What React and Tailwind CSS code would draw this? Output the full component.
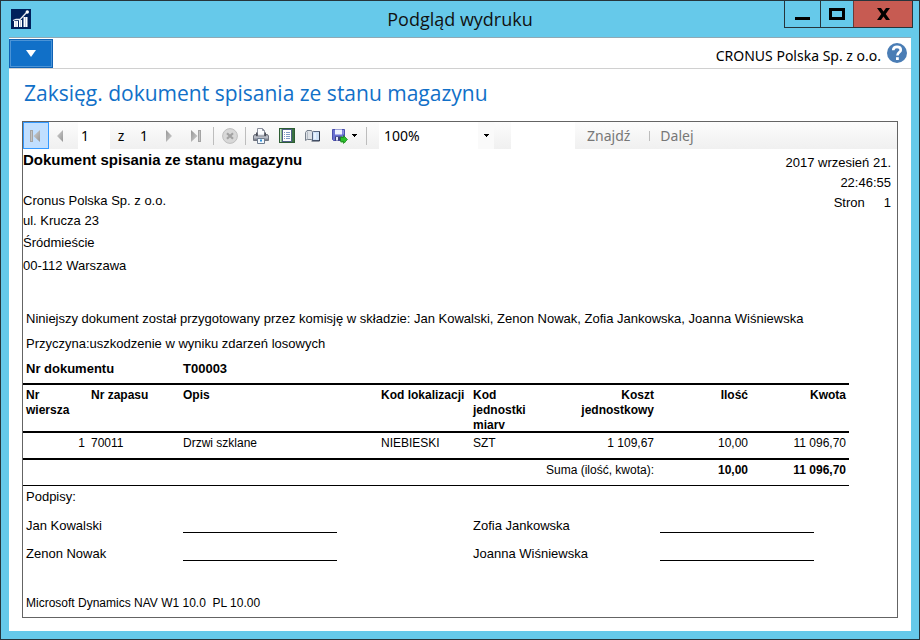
import React from 'react';

function AppIcon() {
  return (
    <svg width="20" height="20" viewBox="0 0 20 20" aria-hidden="true">
      <rect width="20" height="20" fill="#00205b" />
      <path d="M3 12h4v6H3zM8 11h3v7H8zM12.5 8h4v10h-4z" fill="#fff" />
      <path d="M5 12v6M9.5 11v7M14.5 8v10" stroke="#c3cbdc" strokeWidth="1" />
      <path d="M2 11.5 L5 10.5 L9 10.5 L15.5 3.5" fill="none" stroke="#e8ebf2" strokeWidth="1.3" />
      <circle cx="16.3" cy="3" r="1.7" fill="#fff" />
    </svg>
  );
}

function HelpIcon() {
  return (
    <svg width="20" height="20" viewBox="0 0 20 20" aria-hidden="true">
      <circle cx="10" cy="10" r="10" fill="#4a7db5" />
      <path d="M6.2 7.2C6.2 4.8 7.8 3.9 10 3.9s3.8 1.1 3.8 3.1c0 2.4-3.4 2.4-3.4 5.6" fill="none" stroke="#fff" strokeWidth="2.6" />
      <rect x="9" y="14.2" width="2.8" height="2.8" fill="#fff" />
    </svg>
  );
}

function Arrow({ dir, bar }) {
  return (
    <svg width="12" height="14" viewBox="0 0 12 14" className={dir === 'right' ? 'rotate-180' : ''} aria-hidden="true">
      <defs>
        <linearGradient id={`g-${dir}-${bar ? 'b' : 'n'}`} x1="0" x2="1" y1="0" y2="1">
          <stop offset="0" stopColor="#d2d2d2" />
          <stop offset="1" stopColor="#959595" />
        </linearGradient>
      </defs>
      {bar && <rect x="0.5" y="1.5" width="2" height="11" fill="#c4c4c4" stroke="#a4a4a4" strokeWidth="1" />}
      <path d={bar ? 'M10 1v12L3.500 7z' : 'M9 1v12L3 7z'} fill={`url(#g-${dir}-${bar ? 'b' : 'n'})`} />
    </svg>
  );
}

function StopIcon() {
  return (
    <svg width="16" height="16" viewBox="0 0 16 16" aria-hidden="true">
      <circle cx="8" cy="8" r="7.4" fill="#d8d8d8" stroke="#bebebe" />
      <path d="M5 5.200l6 5.600M11 5.200l-6 5.600" stroke="#a2a2a2" strokeWidth="2.2" />
    </svg>
  );
}

function PrinterIcon() {
  return (
    <svg width="16" height="16" viewBox="0 0 16 16" aria-hidden="true">
      <path d="M4.500 6V.5h5l2 2V6" fill="#fbfcfe" stroke="#8a8f9c" />
      <path d="M9.500.5v2h2" fill="none" stroke="#8a8f9c" />
      <path d="M1.500 6.500h13l1 1.500v4.500h-15V8z" fill="#9da1ac" stroke="#70747f" />
      <path d="M3 4.500h1.500v3h7v-3H13v4H3z" fill="#4b4e58" />
      <path d="M5 6h6v1.500H5z" fill="#e6e9ef" />
      <path d="M1 9h14" stroke="#d3d6dd" />
      <path d="M1 11.500h14" stroke="#7f838e" />
      <path d="M4.500 10.500h7v5h-7z" fill="#f2f8fd" stroke="#6f7c8f" />
      <path d="M7 11.500h2v2H7z" fill="#2f8fd8" />
    </svg>
  );
}

function LayoutIcon() {
  return (
    <svg width="16" height="15" viewBox="0 0 16 15" aria-hidden="true">
      <rect x=".5" y=".5" width="15" height="14" fill="#84b886" stroke="#2d5d33" />
      <rect x="1" y="1" width="1" height="13" fill="#c4dfc0" />
      <rect x="13" y="1" width="2" height="13" fill="#3b7243" />
      <rect x="3.500" y="1.500" width="9" height="12" fill="#fff" stroke="#4f5f86" />
      <path d="M5 4.500h1M7 4.500h4M5 6.500h1M7 6.500h4M5 8.500h1M7 8.500h4M5 10.500h1M7 10.500h4" stroke="#7f9cc4" />
    </svg>
  );
}

function PageSetupIcon() {
  return (
    <svg width="16" height="14" viewBox="0 0 16 14" aria-hidden="true">
      <path d="M.5 3.500 2 1.500h4.500l1 1.500v8.500l-1-1H2l-1.500 1z" fill="#dde1e6" stroke="#767f8b" />
      <path d="M2.500 2.500v8" stroke="#b3bac4" />
      <path d="M7 11.500V3l1.500-1.500V10z" fill="#8d97a6" />
      <path d="M7.500 11.500V3.500l1-1h6v9z" fill="#cfe2f7" stroke="#56657f" />
      <path d="M9 4h2v6H9z" fill="#e8f2fd" />
      <path d="M14.500 2.500v9.500h-8" fill="none" stroke="#333d50" />
    </svg>
  );
}

function SaveIcon() {
  return (
    <svg width="16" height="16" viewBox="0 0 16 16" aria-hidden="true">
      <path d="M.5 1.500h12v11h-11l-1-1z" fill="#6a70d2" stroke="#4a4fae" />
      <rect x="3" y="1.500" width="7" height="5" fill="#eef2ff" />
      <path d="M10.500 2h1.500v4h-1.500z" fill="#8d93e3" />
      <rect x="3" y="8.500" width="6.500" height="4" fill="#3a3f78" />
      <rect x="4" y="9" width="2" height="3.500" fill="#e5e8f8" />
      <path d="M9.500 8 12 10.500 13.500 9v5.500H8.500L10.500 12.500 8.500 10z" fill="#2cc02c" />
      <path d="M8.500 9.500h3V7.500l4 4-4 4v-2h-3z" fill="#2cc02c" stroke="#178017" strokeWidth=".7" />
    </svg>
  );
}

function Caret() {
  return (
    <svg width="5" height="3" viewBox="0 0 5 3" aria-hidden="true" shapeRendering="crispEdges">
      <path d="M0 0h5v1H4v1H3v1H2V2H1V1H0z" fill="#000" />
    </svg>
  );
}

function Separator() {
  return <span className="h-[18px] w-px shrink-0 bg-[#bdbdbd]" />;
}

function ToolButton({ label, className = 'w-[26px]', children }) {
  return (
    <button type="button" aria-label={label} className={`flex h-full shrink-0 items-center justify-center ${className}`}>
      {children}
    </button>
  );
}

function TitleBar() {
  return (
    <header className="grid h-9 grid-cols-[1fr_auto_1fr] items-start">
      <div className="pt-2 pl-2.5">
        <AppIcon />
      </div>
      <h1 className="text-[18px] leading-9 text-[#111]">Podgląd wydruku</h1>
      <div className="mr-1.5 flex h-[27px] justify-self-end border-x border-b border-[#26343b]">
        <button type="button" aria-label="Minimalizuj" className="flex w-[35px] items-center justify-center">
          <span className="mt-2 h-[3px] w-[15px] bg-black" />
        </button>
        <button type="button" aria-label="Maksymalizuj" className="flex w-[33px] items-center justify-center border-l border-[#26343b]">
          <span className="h-3 w-4 border-[3px] border-black" />
        </button>
        <button type="button" aria-label="Zamknij" className="flex w-[59px] items-center justify-center border-l border-[#6b3a38] bg-[#c75b52]">
          <svg width="13" height="12" viewBox="0 0 13 12" aria-hidden="true">
            <path d="M0 0h4l2.500 3.500L9 0h4L8.700 6 13 12H9L6.500 8.500 4 12H0l4.300-6z" fill="#000" />
          </svg>
        </button>
      </div>
    </header>
  );
}

function ReportToolbar() {
  return (
    <div className='flex h-[27px] items-center bg-linear-to-b from-[#fcfcfc] to-[#f0f0f0] font-["Noto_Sans","Open_Sans",sans-serif] text-[14px]'>
      <ToolButton label="Pierwsza strona" className="w-[26px] border border-[#3399ff] bg-[#c1dfff]">
        <Arrow dir="left" bar />
      </ToolButton>
      <ToolButton label="Poprzednia strona" className="w-[22px]">
        <Arrow dir="left" />
      </ToolButton>
      <input aria-label="Numer strony" defaultValue="1" className="ml-[7px] h-full w-8 shrink-0 bg-white pl-[3px] outline-none" />
      <span className="w-[22px] text-center">z</span>
      <span className="w-6 text-center">1</span>
      <ToolButton label="Następna strona">
        <Arrow dir="right" />
      </ToolButton>
      <ToolButton label="Ostatnia strona">
        <Arrow dir="right" bar />
      </ToolButton>
      <span className="w-[5px]" />
      <Separator />
      <ToolButton label="Zatrzymaj" className="w-[31px]">
        <StopIcon />
      </ToolButton>
      <Separator />
      <span className="w-0.5" />
      <ToolButton label="Drukuj">
        <PrinterIcon />
      </ToolButton>
      <ToolButton label="Układ wydruku">
        <LayoutIcon />
      </ToolButton>
      <ToolButton label="Ustawienia strony">
        <PageSetupIcon />
      </ToolButton>
      <ToolButton label="Eksportuj" className="w-9 gap-1">
        <SaveIcon />
        <Caret />
      </ToolButton>
      <span className="w-1" />
      <Separator />
      <div className="relative ml-3 h-full w-[115px] shrink-0 bg-white">
        <select aria-label="Powiększenie" defaultValue="100%" className="h-full w-full appearance-none bg-transparent pl-[5px] outline-none">
          <option>50%</option>
          <option>100%</option>
          <option>200%</option>
        </select>
        <span className="pointer-events-none absolute inset-y-0 right-0 flex w-4 items-center justify-center bg-[#fafafa]">
          <Caret />
        </span>
      </div>
      <input aria-label="Szukany tekst" className="ml-[17px] h-full w-16 shrink-0 bg-white px-1 outline-none" />
      <button type="button" className="ml-3 h-full text-[#777]">Znajdź</button>
      <span className="mr-2.5 ml-[19px] h-2.5 w-px bg-[#bdbdbd]" />
      <button type="button" className="h-full text-[#777]">Dalej</button>
    </div>
  );
}

const COLUMNS = [
  { title: 'Nr wiersza', width: 'w-[65px]', cell: 'text-right' },
  { title: 'Nr zapasu', width: 'w-[92px]' },
  { title: 'Opis', width: 'w-[198px]' },
  { title: 'Kod lokalizacji', width: 'w-[92px]' },
  { title: 'Kod jednostki miary', width: 'w-[80px]' },
  { title: 'Koszt jednostkowy', width: 'w-[107px]', head: 'text-right', cell: 'text-right' },
  { title: 'Ilość', width: 'w-[94px]', head: 'text-right', cell: 'text-right' },
  { title: 'Kwota', width: 'w-[98px]', head: 'text-right', cell: 'text-right' },
];

const ROWS = [['1', '70011', 'Drzwi szklane', 'NIEBIESKI', 'SZT', '1 109,67', '10,00', '11 096,70']];

function ReportTable() {
  return (
    <table className="w-[826px] table-fixed border-collapse text-[12px]">
      <colgroup>
        {COLUMNS.map((c) => (
          <col key={c.title} className={c.width} />
        ))}
      </colgroup>
      <thead>
        <tr className="border-y-2 border-black align-top">
          {COLUMNS.map((c) => (
            <th key={c.title} scope="col" className={`p-0 pb-0.5 font-bold ${c.head || 'text-left'}`}>
              <div className="h-11 overflow-hidden px-[3px] pt-[3px] leading-[15px]">{c.title}</div>
            </th>
          ))}
        </tr>
      </thead>
      <tbody>
        {ROWS.map((row) => (
          <tr key={row[0]} className="h-[27px] border-b-2 border-black align-top">
            {row.map((value, i) => (
              <td key={COLUMNS[i].title} className={`px-[3px] py-0.5 leading-4 ${COLUMNS[i].cell || ''}`}>
                {value}
              </td>
            ))}
          </tr>
        ))}
      </tbody>
      <tfoot>
        <tr className="h-[26px] border-b border-black text-right align-top">
          <td colSpan={6} className="px-[3px] py-0.5 leading-4">Suma (ilość, kwota):</td>
          <td className="px-[3px] py-0.5 leading-4 font-bold">10,00</td>
          <td className="px-[3px] py-0.5 leading-4 font-bold">11 096,70</td>
        </tr>
      </tfoot>
    </table>
  );
}

function Signature({ name, labelWidth }) {
  return (
    <div className="flex">
      <span className={labelWidth}>{name}</span>
      <span className="mb-[7px] w-[154px] border-b border-black" />
    </div>
  );
}

function Report() {
  return (
    <article className='flex-1 font-["Liberation_Sans",Arial,sans-serif] text-[13px] text-black'>
      <div className="flex justify-between">
        <div>
          <h3 className="mb-5 text-[15px] leading-[22px] font-bold">Dokument spisania ze stanu magazynu</h3>
          <address className="not-italic">
            <p className="leading-5">Cronus Polska Sp. z o.o.</p>
            <p className="leading-5">ul. Krucza 23</p>
            <p className="leading-[23px]">Śródmieście</p>
            <p className="leading-[23px]">00-112 Warszawa</p>
          </address>
        </div>
        <div className="pt-1 pr-1.5 text-right leading-5">
          <p>2017 wrzesień 21.</p>
          <p>22:46:55</p>
          <p className="flex justify-end gap-[19px]">
            <span>Stron</span>
            <span>1</span>
          </p>
        </div>
      </div>
      <div className="mt-[29px] mb-0.5 pl-[3px] leading-[25px]">
        <p>Niniejszy dokument został przygotowany przez komisję w składzie: Jan Kowalski, Zenon Nowak, Zofia Jankowska, Joanna Wiśniewska</p>
        <p>Przyczyna:uszkodzenie w wyniku zdarzeń losowych</p>
        <p className="flex font-bold">
          <span className="w-[157px]">Nr dokumentu</span>
          <span>T00003</span>
        </p>
      </div>
      <ReportTable />
      <div className="pl-[3px]">
        <h4 className="mb-[5px] leading-[21px]">Podpisy:</h4>
        <div className="grid grid-cols-[447px_auto] leading-7">
          <Signature name="Jan Kowalski" labelWidth="w-[157px]" />
          <Signature name="Zofia Jankowska" labelWidth="w-[187px]" />
          <Signature name="Zenon Nowak" labelWidth="w-[157px]" />
          <Signature name="Joanna Wiśniewska" labelWidth="w-[187px]" />
        </div>
        <footer className="mt-[27px] text-[12px] leading-4">Microsoft Dynamics NAV W1 10.0&nbsp; PL 10.00</footer>
      </div>
    </article>
  );
}

export default function App() {
  return (
    <div className='flex min-h-screen flex-col border border-[#26343b] bg-[#66c9ea] font-["Open_Sans","Noto_Sans",sans-serif] text-black'>
      <TitleBar />
      <main className="mx-2 mb-2 flex flex-1 flex-col border-t border-[#8fa9b5] bg-white">
        <div className="flex h-[31px] items-center justify-between border-b border-[#d0d0d0]">
          <button type="button" aria-label="Menu aplikacji" className="mt-px flex h-[29px] w-11 items-center justify-center border border-[#0f62b5] bg-[#1170c8] outline-1 -outline-offset-2 outline-[#4a93d6]">
            <svg width="10" height="7" viewBox="0 0 10 7" aria-hidden="true">
              <path d="M0 0h10L5 7z" fill="#fff" />
            </svg>
          </button>
          <div className="flex items-center gap-1.5 pr-1">
            <span className='pt-1 font-["Noto_Sans","Open_Sans",sans-serif] text-[14px]'>CRONUS Polska Sp. z o.o.</span>
            <button type="button" aria-label="Pomoc">
              <HelpIcon />
            </button>
          </div>
        </div>
        <h2 className="pt-2 pl-[15px] text-[21px] leading-8 text-[#1170c8]">Zaksięg. dokument spisania ze stanu magazynu</h2>
        <section className="mx-[13px] mt-3 mb-[13px] flex flex-1 flex-col border border-[#646464]">
          <ReportToolbar />
          <Report />
        </section>
      </main>
    </div>
  );
}
